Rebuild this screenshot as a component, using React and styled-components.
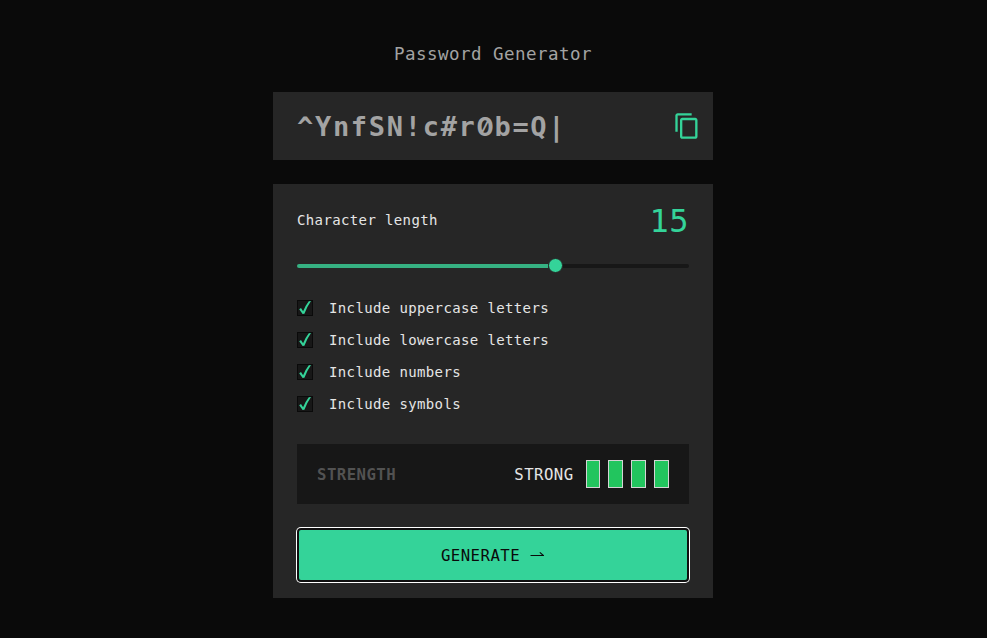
import React, { useState } from "react";
import styled, { createGlobalStyle } from "styled-components";

const Global = createGlobalStyle`
  *, *::before, *::after { box-sizing: border-box; }
  html, body { margin: 0; background: #0a0a0a; }
  body, button { font-family: Consolas, "DejaVu Sans Mono", monospace; }
`;

const Page = styled.main`
  min-height: 638px;
  display: flex;
  flex-direction: column;
  align-items: center;
  background: #0a0a0a;
  padding: 40px 1px 0 0;
`;

const Title = styled.h1`
  margin: 0 0 24px;
  height: 28px;
  font-size: 17.5px;
  line-height: 29px;
  font-weight: 400;
  letter-spacing: 0.464px;
  color: #a3a3a3;
  white-space: pre;
`;

const PasswordBar = styled.section`
  width: 440px;
  height: 68px;
  margin-bottom: 24px;
  padding: 0 12px 0 24px;
  display: flex;
  align-items: center;
  justify-content: space-between;
  background: #262626;
`;

const Password = styled.output`
  padding-top: 1px;
  font-size: 27px;
  line-height: 36px;
  font-weight: 700;
  letter-spacing: 1.7px;
  color: #a3a3a3;
  white-space: pre;
`;

const SlashedZero = styled.span`
  display: inline-block;
  width: 17.9px;
  font-family: Inter, sans-serif;
  font-feature-settings: "zero";
  font-size: 25.5px;
  font-weight: 700;
  letter-spacing: 0;
  line-height: 1;
`;

const CopyButton = styled.button`
  width: 30px;
  height: 30px;
  padding: 0;
  border: 0;
  background: none;
  color: #34d399;
  display: flex;
  align-items: center;
  justify-content: flex-end;
`;

const Panel = styled.section`
  width: 440px;
  height: 414px;
  padding: 16px 24px;
  display: flex;
  flex-direction: column;
  background: #262626;
`;

const LengthRow = styled.div`
  height: 40px;
  display: flex;
  align-items: center;
  justify-content: space-between;
`;

const Label = styled.span`
  font-size: 14px;
  line-height: 24px;
  letter-spacing: 0.372px;
  color: #e5e5e5;
  white-space: pre;
`;

const LengthValue = styled.span`
  padding-top: 2px;
  font-size: 32px;
  line-height: 40px;
  letter-spacing: 0.5px;
  color: #34d399;
`;

const Slider = styled.div`
  height: 15px;
  margin-top: 18px;
  display: flex;
  align-items: flex-start;
`;

const Track = styled.div`
  height: 4px;
  margin-top: 6px;
  background: ${(p) => (p.$filled ? "#36b182" : "#171717")};
  border-radius: ${(p) => (p.$filled ? "2px 0 0 2px" : "0 2px 2px 0")};
  flex: ${(p) => (p.$filled ? "0 0 251px" : "1")};
`;

const Thumb = styled.div`
  width: 15px;
  height: 15px;
  border: 1px solid #262626;
  border-radius: 50%;
  background: #34d399;
`;

const Options = styled.div`
  margin-top: 23px;
  display: flex;
  flex-direction: column;
  gap: 8px;
`;

const Option = styled.label`
  height: 24px;
  display: flex;
  align-items: center;
  gap: 16px;
`;

const Box = styled.span`
  width: 16px;
  height: 16px;
  border: 1px solid #0a0a0a;
  background: #171717;
  display: flex;
`;

const Strength = styled.div`
  height: 60px;
  margin-top: 28px;
  padding: 0 20px;
  display: flex;
  align-items: center;
  background: #171717;
`;

const StrengthText = styled.span`
  padding-top: 2px;
  font-size: 15.7px;
  line-height: 28px;
  letter-spacing: 0.45px;
  font-weight: ${(p) => (p.$muted ? 700 : 400)};
  color: ${(p) => (p.$muted ? "#525252" : "#e5e5e5")};
  margin-right: ${(p) => (p.$muted ? "auto" : "12px")};
`;

const Bars = styled.div`
  display: flex;
  gap: 8px;
  margin-right: 0.35px;
`;

const Bar = styled.span`
  width: 14.75px;
  height: 28px;
  border: 1px solid #d4d4d4;
  background: #22c55e;
`;

const Generate = styled.button`
  height: 50px;
  margin: 26px 2px 0;
  padding: 0 1px 0 0;
  border: 0;
  border-radius: 2px;
  outline: none;
  box-shadow: 0 0 0 2px #101010, 0 0 0 3px #fff;
  background: #34d399;
  color: #0a0a0a;
  display: flex;
  align-items: center;
  justify-content: center;
  gap: 10px;
  font-size: 15.7px;
  letter-spacing: 0.45px;
`;

const OPTIONS = [
  "Include uppercase letters",
  "Include lowercase letters",
  "Include numbers",
  "Include symbols",
];

const CopyIcon = () => (
  <svg width="28" height="28" viewBox="0 0 24 24" fill="currentColor">
    <path fill="none" d="M0 0h24v24H0z" />
    <path d="M16 1H4c-1.1 0-2 .9-2 2v14h2V3h12V1zm3 4H8c-1.1 0-2 .9-2 2v14c0 1.1.9 2 2 2h11c1.1 0 2-.9 2-2V7c0-1.1-.9-2-2-2zm0 16H8V7h11v14z" />
  </svg>
);

const Check = () => (
  <svg width="14" height="14" viewBox="0 0 14 14">
    <path d="M1.2 8.2 3 7.1 5.1 10.2Q7.4 4.6 10.8 .3L13 0Q9.1 5.6 6.4 12.8L4.6 13.1Z" fill="#34d399" />
  </svg>
);

const Arrow = () => (
  <svg width="14" height="8" viewBox="0 0 14 8" fill="none" stroke="currentColor" strokeWidth="1.1">
    <path d="M0.5 4.5H13.5L9.8 1.3" />
  </svg>
);

export default function App() {
  const [length] = useState(15);
  return (
    <>
      <Global />
      <Page>
        <Title>Password Generator</Title>
        <PasswordBar>
          <Password>
            ^YnfSN!c#r<SlashedZero>0</SlashedZero>b=Q|
          </Password>
          <CopyButton aria-label="Copy password">
            <CopyIcon />
          </CopyButton>
        </PasswordBar>
        <Panel>
          <LengthRow>
            <Label>Character length</Label>
            <LengthValue>{length}</LengthValue>
          </LengthRow>
          <Slider>
            <Track $filled />
            <Thumb />
            <Track />
          </Slider>
          <Options>
            {OPTIONS.map((text) => (
              <Option key={text}>
                <Box>
                  <Check />
                </Box>
                <Label>{text}</Label>
              </Option>
            ))}
          </Options>
          <Strength>
            <StrengthText $muted>STRENGTH</StrengthText>
            <StrengthText>STRONG</StrengthText>
            <Bars>
              {[0, 1, 2, 3].map((i) => (
                <Bar key={i} />
              ))}
            </Bars>
          </Strength>
          <Generate>
            GENERATE
            <Arrow />
          </Generate>
        </Panel>
      </Page>
    </>
  );
}
